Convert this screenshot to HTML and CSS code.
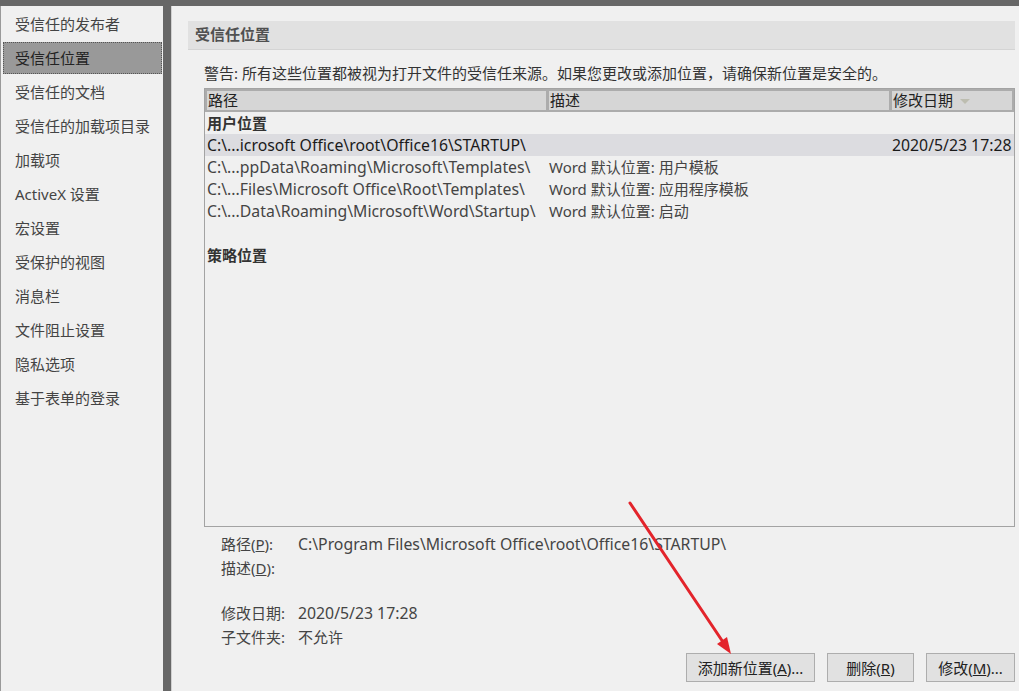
FILE: index.html
```html
<!DOCTYPE html>
<html>
<head>
<meta charset="utf-8">
<link rel="stylesheet" href="styles.css">
</head>
<body>
<div id="nav">
	<div class="item">受信任的发布者</div>
	<div class="item sel">受信任位置</div>
	<div class="item">受信任的文档</div>
	<div class="item">受信任的加载项目录</div>
	<div class="item">加载项</div>
	<div class="item">ActiveX 设置</div>
	<div class="item">宏设置</div>
	<div class="item">受保护的视图</div>
	<div class="item">消息栏</div>
	<div class="item">文件阻止设置</div>
	<div class="item">隐私选项</div>
	<div class="item">基于表单的登录</div>
</div>

<div id="main">
	<div class="title">受信任位置</div>
	<p class="warn">警告: 所有这些位置都被视为打开文件的受信任来源。如果您更改或添加位置，请确保新位置是安全的。</p>

	<div class="list">
		<div class="head">
			<div>路径</div>
			<div>描述</div>
			<div>修改日期 <span class="sort"></span></div>
		</div>
		<div class="group">用户位置</div>
		<div class="row cur">
			<div class="lat">C:\...icrosoft Office\root\Office16\STARTUP\</div>
			<div></div>
			<div class="lat">2020/5/23 17:28</div>
		</div>
		<div class="row">
			<div class="lat">C:\...ppData\Roaming\Microsoft\Templates\</div>
			<div>Word 默认位置: 用户模板</div>
			<div></div>
		</div>
		<div class="row">
			<div class="lat">C:\...Files\Microsoft Office\Root\Templates\</div>
			<div>Word 默认位置: 应用程序模板</div>
			<div></div>
		</div>
		<div class="row">
			<div class="lat">C:\...Data\Roaming\Microsoft\Word\Startup\</div>
			<div>Word 默认位置: 启动</div>
			<div></div>
		</div>
		<div class="row"></div>
		<div class="group">策略位置</div>
	</div>

	<div class="info">
		<span>路径(<u>P</u>):</span><span class="lat">C:\Program Files\Microsoft Office\root\Office16\STARTUP\</span>
		<span>描述(<u>D</u>):</span><span></span>
		<span class="gap">修改日期:</span><span class="gap lat">2020/5/23 17:28</span>
		<span>子文件夹:</span><span>不允许</span>
	</div>

	<div class="buttons">
		<button class="add">添加新位置(<u>A</u>)...</button>
		<button class="del">删除(<u>R</u>)</button>
		<button class="mod">修改(<u>M</u>)...</button>
	</div>
</div>

<svg id="arrow" width="1019" height="691" viewBox="0 0 1019 691">
	<line x1="630" y1="503" x2="723" y2="642" stroke="#e3242b" stroke-width="3" stroke-linecap="round"/>
	<polygon points="731,654 717,644 727,637" fill="#e3242b"/>
</svg>
</body>
</html>
```

FILE: styles.css
```css
html, body {
	height: 100%;
}

body {
	margin: 0;
	padding-top: 6px;
	box-sizing: border-box;
	display: flex;
	gap: 8px;
	background: #676767;
	font-family: "Noto Sans", "Noto Sans CJK SC", sans-serif;
	font-size: 15px;
	color: #333;
	overflow: hidden;
}

/* latin-only text runs a bit wider in the original font */
.lat {
	font-size: 15.8px;
}

#nav {
	width: 162px;
	border-left: 1px solid #9a9a9a;
	background: #f0f0f0;
	display: flex;
	flex-direction: column;
	padding-top: 1px;
}
.item {
	height: 30px;
	line-height: 30px;
	margin: 1px 1px 1px 2px;
	padding-left: 11px;
	border: 1px solid transparent;
	color: #444;
	white-space: nowrap;
}
.item.sel {
	background: #999;
	border: 1px dotted #555;
	color: #222;
}

#main {
	flex: 1;
	background: #f0f0f0;
	border-left: 1px solid #d0d0d0;
	padding: 15px 4px 9px 16px;
	display: flex;
	flex-direction: column;
}

.title {
	height: 28px;
	line-height: 27px;
	padding-left: 7px;
	background: #e1e1e1;
	border-bottom: 1px solid #d4d4d4;
	font-weight: bold;
	color: #505050;
}

.warn {
	margin: 13px 0 0 16px;
	line-height: 20px;
	font-size: 15px;
	color: #333;
	white-space: nowrap;
}

.list {
	margin: 5px 0 0 16px;
	height: 439px;
	box-sizing: border-box;
	border: 1px solid #a3a3a3;
	background: #f0f0f0;
}
.head, .row {
	display: grid;
	grid-template-columns: 339px 340px 120px;
	gap: 3px;
	padding: 0 2px;
	white-space: nowrap;
}
.head {
	padding: 2px;
	background: #acacac;
}
.head div {
	background: #d6d6d6;
	line-height: 19px;
	padding-left: 1px;
	color: #222;
}
.sort {
	display: inline-block;
	vertical-align: middle;
	margin-left: 3px;
	border-left: 5px solid transparent;
	border-right: 5px solid transparent;
	border-top: 5px solid #bdbdb0;
}
.row {
	height: 22px;
	line-height: 22px;
	color: #444;
}
.row.cur {
	background: #dcdce0;
	color: #1a1a1a;
}
.group {
	height: 22px;
	line-height: 22px;
	padding-left: 2px;
	font-weight: bold;
	color: #333;
}

.info {
	margin: 5px 0 0 33px;
	display: grid;
	grid-template-columns: 77px auto;
	line-height: 24px;
	color: #444;
}
.info .gap {
	margin-top: 21px;
}

.buttons {
	margin-top: auto;
	display: flex;
	justify-content: flex-end;
	gap: 12px;
}
button {
	height: 29px;
	padding: 0;
	border: 1px solid #adadad;
	background: #e1e1e1;
	font-family: inherit;
	font-size: 15px;
	color: #222;
}
.add {
	width: 129px;
}
.del {
	width: 87px;
}
.mod {
	width: 89px;
}

#arrow {
	position: absolute;
	left: 0;
	top: 0;
	pointer-events: none;
}
```
